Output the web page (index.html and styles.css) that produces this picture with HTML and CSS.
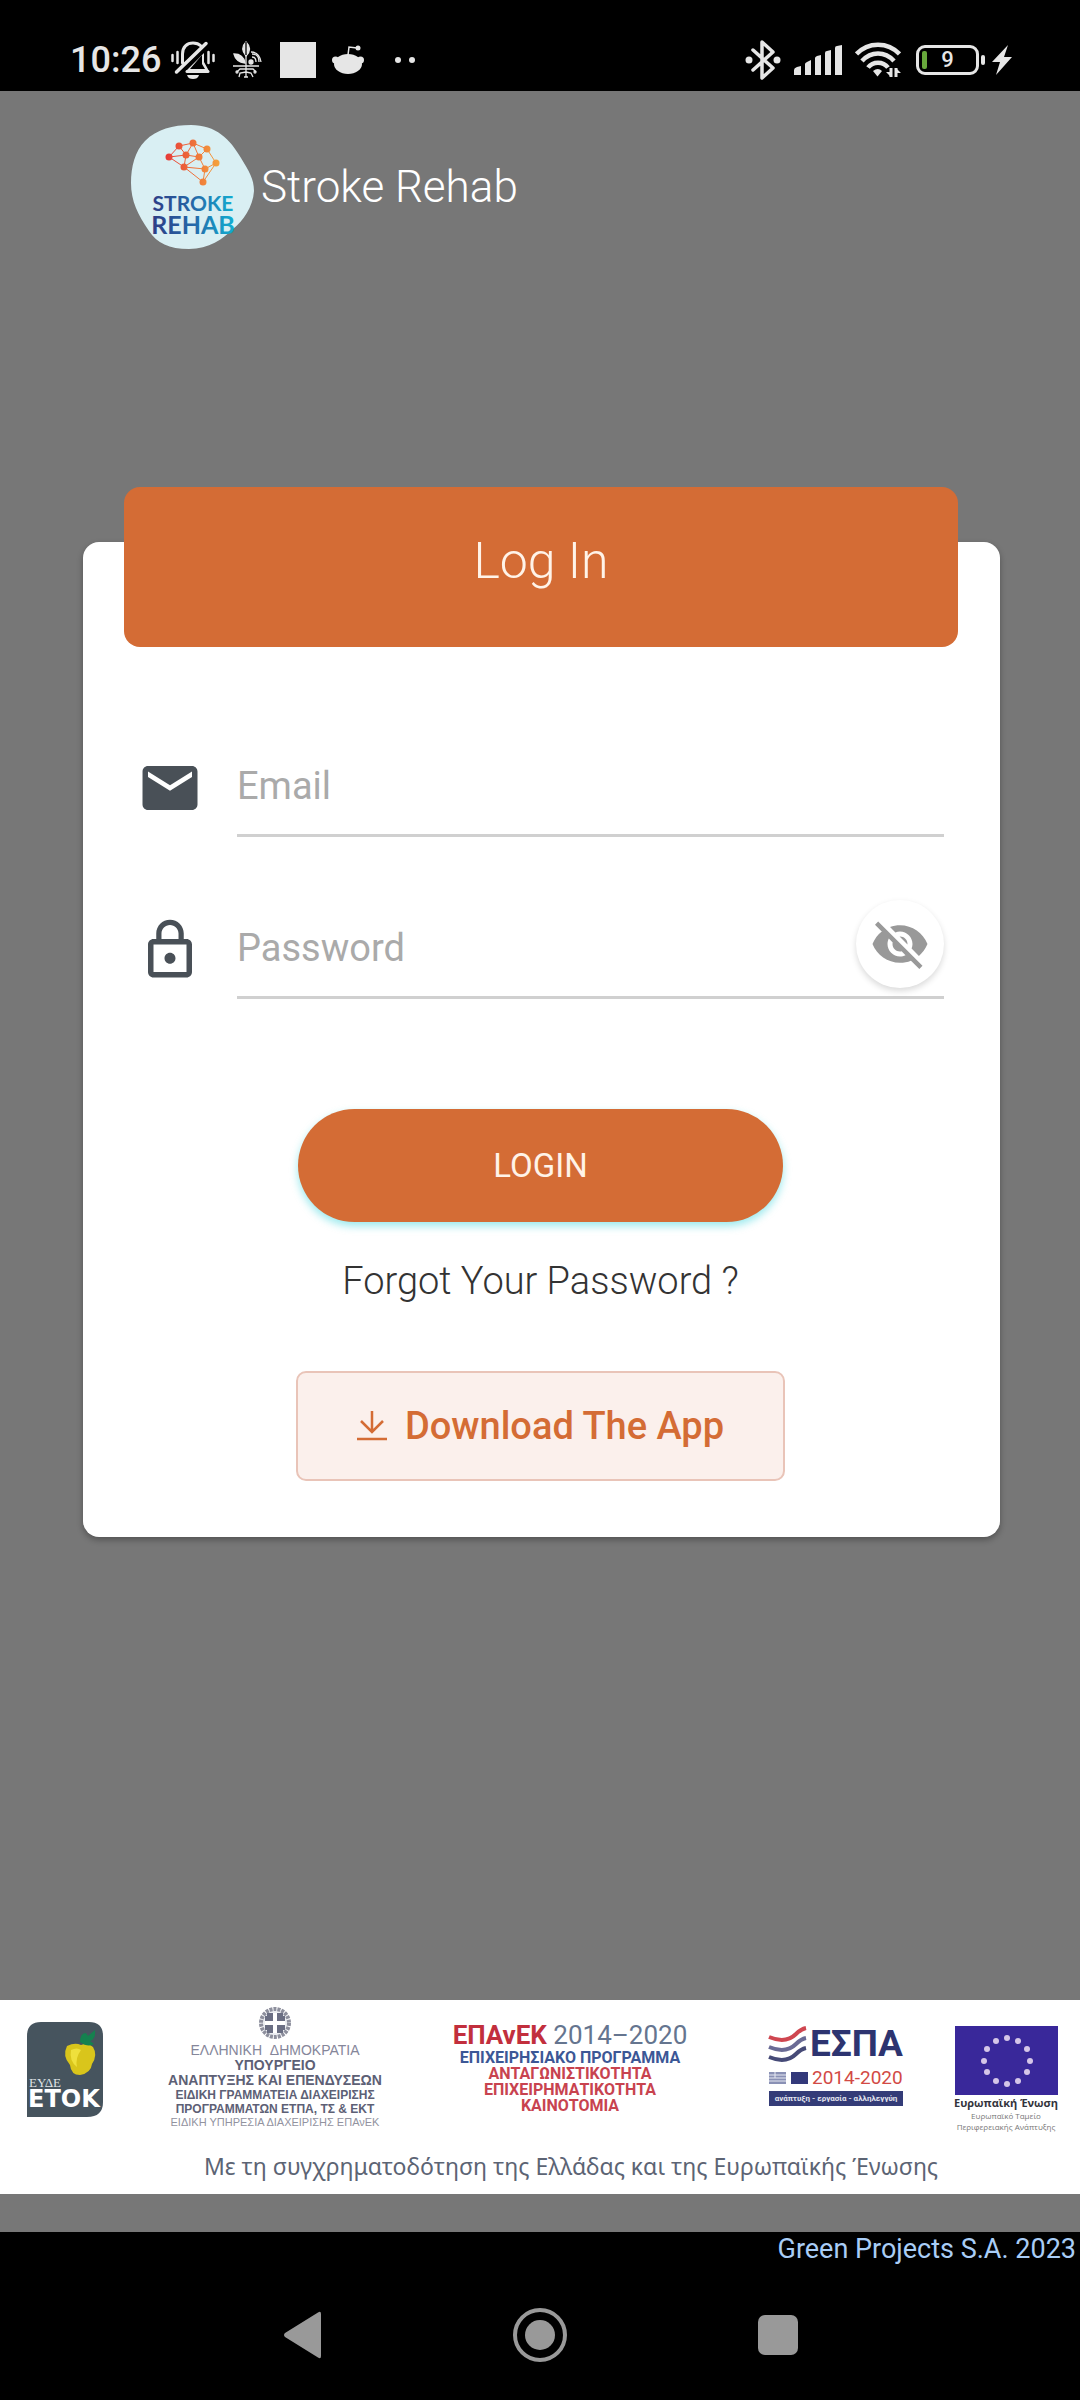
FILE: index.html
```html
<!DOCTYPE html>
<html lang="en">
<head>
    <title>Stroke Rehab</title>
    <meta charset="utf-8">
    <meta name="viewport" content="width=device-width, initial-scale=1">
    <link rel="stylesheet" href="styles.css">
</head>
<body>

<div class="status-bar">
    <div class="status-left">
        <span class="clock">10:26</span>
        <svg class="bell" width="44" height="38" viewBox="0 0 44 38" fill="none" stroke="#e6e6e6" stroke-linecap="round">
            <path d="M1.500 14v6M6.500 11v11M37.500 11v11M42.500 14v6" stroke-width="2.500"/>
            <path d="M11.500 22V13C11.500 6 16 2 22 2c3 0 6 1 8 3" stroke-width="3"/>
            <path d="M5.500 31L35 2.500" stroke-width="3.500"/>
            <path d="M33 12v9l5 9H15z" fill="#e6e6e6" stroke="none"/>
            <path d="M31 14v9l3 5H19z" fill="#000" stroke="none"/>
            <path d="M16 30.500h21" stroke-width="3"/>
            <path d="M16 34h12c-1 3-3 4-6 4s-5-1-6-4z" fill="#e6e6e6" stroke="none"/>
        </svg>
        <svg class="plant" width="30" height="38" viewBox="0 0 30 38" fill="none" stroke="#e6e6e6" stroke-width="1.300">
            <path d="M13 12V36M0 25h26"/>
            <path d="M13 15C8 9 10 4 13 1c4 4 5 9 0 14z" fill="#e6e6e6"/>
            <path d="M13 1v13" stroke="#000"/>
            <path d="M12 22C4 21 2 17 1 13c7 0 10 4 11 9z" fill="#e6e6e6"/>
            <path d="M19 16c3 0 4 2 4 5M19 13c5 0 7 3 7 8M18 11c6 0 9 4 10 10"/>
            <path d="M13 28H7l-3 3M13 31l-6 1-1 4M13 28h7l3 3M13 31l5 1 2 4M11 36h4"/>
            <circle cx="18" cy="21" r="2" fill="#e6e6e6"/>
            <circle cx="4" cy="31" r="1"/><circle cx="22" cy="31" r="1"/>
        </svg>
        <span class="block"></span>
        <svg class="reddit" width="32" height="30" viewBox="0 0 32 30" fill="#e6e6e6">
            <ellipse cx="16" cy="19" rx="14" ry="10"/>
            <circle cx="3.500" cy="15" r="3.500"/><circle cx="28.500" cy="15" r="3.500"/>
            <circle cx="26" cy="3" r="2.500"/>
            <path d="M16 10l1-8 8 1" fill="none" stroke="#e6e6e6" stroke-width="1.500"/>
        </svg>
        <svg width="20" height="6" viewBox="0 0 20 6" fill="#e6e6e6"><circle cx="3" cy="3" r="3"/><circle cx="17" cy="3" r="3"/></svg>
    </div>
    <div class="status-right">
        <svg width="36" height="40" viewBox="0 0 36 40" fill="none" stroke="#e6e6e6" stroke-width="3.500" stroke-linecap="round" stroke-linejoin="round">
            <path d="M8 10l20 18-11 10V2l11 10L8 30"/>
            <circle cx="4" cy="20" r="3.500" fill="#e6e6e6" stroke="none"/><circle cx="32" cy="20" r="3.500" fill="#e6e6e6" stroke="none"/>
        </svg>
        <svg class="signal" width="48" height="30" viewBox="0 0 48 30" fill="#e6e6e6">
            <path d="M0 25q0-2 3-3l4-1v9H0zM11 19q0-1 2-2l4-2v15h-6zM21 13q0-1 2-2l4-1v20h-6zM31 8q0-2 2-2l4-1v25h-6zM41 3q0-2 2-2l5-1v30h-7z"/>
        </svg>
        <svg width="46" height="36" viewBox="0 0 46 36" fill="none" stroke="#e6e6e6" stroke-width="4.500">
            <path d="M1.500 12C13-.5 33-.5 44.500 12M7 19C16 9 30 9 39 19M13 25.500C18 19 28 19 33 25.500"/>
            <path d="M18 29q5-4 9 0l-4.500 5.500z" fill="#e6e6e6" stroke="none"/>
            <path d="M36 26v9M41 35v-9" stroke-width="3"/>
            <path d="M31 30h5v5zM46 31h-5v-5z" fill="#e6e6e6" stroke="none"/>
        </svg>
        <span class="battery"><i class="charge"></i><b>9</b></span>
        <svg width="20" height="30" viewBox="0 0 20 30" fill="#e6e6e6"><path d="M16 0L0 17h8L4 30 20 12h-8z"/></svg>
    </div>
</div>

<div class="page">
    <header class="brand">
        <svg class="brand-logo" width="123" height="124" viewBox="0 0 123 124">
            <defs>
                <linearGradient id="word" x1="20" x2="104" y1="0" y2="0" gradientUnits="userSpaceOnUse">
                    <stop offset="0" stop-color="#2d3c85"/>
                    <stop offset=".5" stop-color="#2568a8"/>
                    <stop offset="1" stop-color="#12afd2"/>
                </linearGradient>
                <linearGradient id="net" x1="35" x2="88" y1="0" y2="0" gradientUnits="userSpaceOnUse">
                    <stop offset="0" stop-color="#e63b38"/>
                    <stop offset="1" stop-color="#f5a23c"/>
                </linearGradient>
            </defs>
            <path d="M60 0C85 0 99 14 110 33C118 46 123 54 123 66C122 82 112 96 102 104C92 114 78 124 58 124C38 124 26 118 18 106C7 90 0 76 0 58C0 42 4 26 14 16C26 4 42 0 60 0Z" fill="#d9eff3"/>
            <path d="M38 32L48 21L62 18L76 24L85 38L72 57L53 42ZM38 32L55 30L48 21M55 30L62 18L68 32L76 24M55 30L68 32L53 42L55 30M53 42L74 44L68 32M74 44L72 57M74 44L85 38" fill="none" stroke="url(#net)" stroke-width="1"/>
            <g fill="url(#net)">
                <circle cx="38" cy="32" r="3.500"/><circle cx="48" cy="21" r="3.500"/><circle cx="62" cy="18" r="3.500"/>
                <circle cx="76" cy="24" r="3.500"/><circle cx="85" cy="38" r="3.500"/><circle cx="55" cy="30" r="3.500"/>
                <circle cx="68" cy="32" r="3.500"/><circle cx="53" cy="42" r="3.500"/><circle cx="74" cy="44" r="3.500"/>
                <circle cx="72" cy="57" r="3.500"/>
            </g>
            <text class="word" x="62" y="86" font-size="21" text-anchor="middle" fill="url(#word)">STROKE</text>
            <text class="word" x="62" y="109" font-size="25" text-anchor="middle" fill="url(#word)">REHAB</text>
        </svg>
        <span class="brand-name">Stroke Rehab</span>
    </header>

    <main>
        <form class="card">
            <h1 class="card-head">Log In</h1>

            <div class="fields">
                <div class="field">
                    <label for="email">
                        <svg width="66" height="66" viewBox="0 0 24 24" fill="#495057" role="img" aria-label="Email"><path d="M20 4H4c-1.100 0-1.990.9-1.990 2L2 18c0 1.100.9 2 2 2h16c1.100 0 2-.9 2-2V6c0-1.100-.9-2-2-2zm0 4l-8 5-8-5V6l8 5 8-5v2z"/></svg>
                    </label>
                    <input type="email" id="email" placeholder="Email">
                </div>
                <div class="field">
                    <label for="password">
                        <svg width="66" height="66" viewBox="0 0 24 24" fill="#495057" role="img" aria-label="Password"><path d="M12 17c1.100 0 2-.9 2-2s-.9-2-2-2-2 .9-2 2 .9 2 2 2zm6-9h-1V6c0-2.760-2.240-5-5-5S7 3.240 7 6v2H6c-1.100 0-2 .9-2 2v10c0 1.100.9 2 2 2h12c1.100 0 2-.9 2-2V10c0-1.100-.9-2-2-2zM8.900 6c0-1.710 1.390-3.100 3.100-3.100s3.100 1.390 3.100 3.100v2H8.900V6zM18 20H6V10h12v10z"/></svg>
                    </label>
                    <input type="password" id="password" placeholder="Password">
                    <button type="button" class="reveal" aria-label="Show password">
                        <svg width="60" height="60" viewBox="0 0 24 24" fill="#999"><path d="M12 7c2.760 0 5 2.240 5 5 0 .65-.13 1.260-.36 1.830l2.920 2.920c1.510-1.260 2.700-2.890 3.430-4.750-1.730-4.390-6-7.500-11-7.500-1.400 0-2.740.25-3.980.7l2.160 2.160C10.740 7.130 11.350 7 12 7zM2 4.270l2.280 2.280.46.46C3.080 8.300 1.780 10.020 1 12c1.730 4.390 6 7.500 11 7.500 1.550 0 3.030-.3 4.380-.84l.42.42L19.730 22 21 20.730 3.270 3 2 4.270zM7.530 9.800l1.550 1.550c-.05.21-.08.43-.08.65 0 1.660 1.340 3 3 3 .22 0 .44-.03.65-.08l1.550 1.550c-.67.33-1.410.53-2.200.53-2.760 0-5-2.240-5-5 0-.79.2-1.530.53-2.200zm4.310-.78l3.150 3.150.02-.16c0-1.660-1.340-3-3-3l-.17.01z"/></svg>
                    </button>
                </div>
            </div>

            <button type="submit" class="login">LOGIN</button>
            <a class="forgot" href="#">Forgot Your Password ?</a>
            <a class="download" href="#">
                <svg width="30" height="30" viewBox="0 0 30 30" fill="none" stroke="#d46c35" stroke-width="2.500"><path d="M15 0v21M4 10l11 11 11-11M0 28h30"/></svg>
                Download The App
            </a>
        </form>
    </main>

    <section class="sponsors" lang="el">
        <div class="logos">
            <svg width="76" height="95" viewBox="0 0 76 95">
                <path d="M0 95V14Q0 0 14 0H62Q76 0 76 14V80Q76 95 60 95Z" fill="#46545e"/>
                <path d="M40 24q8-4 14-1q7-3 12 2q5 8-1 17q-1 9-12 11q-9 0-10-10q-8-9-3-19z" fill="#d9c51b"/>
                <path d="M44 28q6-3 10 0q-6 8-4 17q-8-6-6-17z" fill="#efe03c"/>
                <path d="M53 20q0-9 6-9l2 3 7-6q1 9-5 11l4 3q-6 4-14-2z" fill="#15814f"/>
                <text x="2" y="65" font-family="Liberation Serif, serif" font-size="13" fill="#dfe3e6">ΕΥΔΕ</text>
                <text x="1" y="85" font-family="DejaVu Sans, sans-serif" font-size="24" font-weight="bold" fill="#fff">ΕΤΟΚ</text>
            </svg>

            <div class="ministry">
                <svg width="34" height="34" viewBox="0 0 34 34">
                    <circle cx="17" cy="17" r="14" fill="#eceef2" stroke="#8d8f9d" stroke-width="4" stroke-dasharray="3 1"/>
                    <path d="M9 7h16v20H9zM7 10h20v14H7z" fill="#6a6e83"/>
                    <path d="M17 7v20M7 17h20" stroke="#fff" stroke-width="4"/>
                </svg>
                <span class="republic">ΕΛΛΗΝΙΚΗ &nbsp;ΔΗΜΟΚΡΑΤΙΑ</span>
                <b>ΥΠΟΥΡΓΕΙΟ</b>
                <b>ΑΝΑΠΤΥΞΗΣ ΚΑΙ ΕΠΕΝΔΥΣΕΩΝ</b>
                <b class="office">ΕΙΔΙΚΗ ΓΡΑΜΜΑΤΕΙΑ ΔΙΑΧΕΙΡΙΣΗΣ</b>
                <b class="office">ΠΡΟΓΡΑΜΜΑΤΩΝ ΕΤΠΑ, ΤΣ &amp; ΕΚΤ</b>
                <span class="service">ΕΙΔΙΚΗ ΥΠΗΡΕΣΙΑ ΔΙΑΧΕΙΡΙΣΗΣ ΕΠΑνΕΚ</span>
            </div>

            <div class="epanek">
                <p class="epanek-title"><b>ΕΠΑνΕΚ</b> 2014–2020</p>
                <p class="programme">ΕΠΙΧΕΙΡΗΣΙΑΚΟ ΠΡΟΓΡΑΜΜΑ</p>
                <p>ΑΝΤΑΓΩΝΙΣΤΙΚΟΤΗΤΑ</p>
                <p>ΕΠΙΧΕΙΡΗΜΑΤΙΚΟΤΗΤΑ</p>
                <p>ΚΑΙΝΟΤΟΜΙΑ</p>
            </div>

            <svg class="espa" width="134" height="80" viewBox="0 0 134 80">
                <g fill="none" stroke-width="4">
                    <path d="M0 11c12 5 21 3 27-3q5-5 10-6" stroke="#cf4650"/>
                    <path d="M0 21c12 5 21 3 27-3q5-5 10-6" stroke="#6a6b95"/>
                    <path d="M0 31c12 5 21 3 27-3q5-5 10-6" stroke="#464a77"/>
                </g>
                <text x="41" y="30" font-family="Roboto, sans-serif" font-size="37" font-weight="bold" fill="#2d3470">ΕΣΠΑ</text>
                <path d="M0 46h17v12H0z" fill="#8a91b5"/>
                <path d="M0 49h17M0 52h17M0 55h17M6 46v6" stroke="#e7e9f2"/>
                <path d="M22 46h17v12H22z" fill="#33397a"/>
                <text x="43" y="58" font-family="Roboto, sans-serif" font-size="19" fill="#d24a45">2014-2020</text>
                <path d="M0 65h134v15H0z" fill="#343c78"/>
                <text x="67" y="75" text-anchor="middle" font-family="Roboto, sans-serif" font-size="8" font-weight="bold" fill="#e2e4ef">ανάπτυξη - εργασία - αλληλεγγύη</text>
            </svg>

            <div class="eu">
                <svg width="103" height="69" viewBox="0 0 103 69">
                    <path d="M0 0h103v69H0z" fill="#39289a"/>
                    <g fill="#d5c6e8">
                        <circle cx="52" cy="12" r="3"/><circle cx="63" cy="15" r="3"/><circle cx="72" cy="23" r="3"/>
                        <circle cx="75" cy="35" r="3"/><circle cx="72" cy="46" r="3"/><circle cx="63" cy="55" r="3"/>
                        <circle cx="52" cy="58" r="3"/><circle cx="41" cy="55" r="3"/><circle cx="32" cy="46" r="3"/>
                        <circle cx="29" cy="35" r="3"/><circle cx="32" cy="23" r="3"/><circle cx="41" cy="15" r="3"/>
                    </g>
                </svg>
                <b>Ευρωπαϊκή Ένωση</b>
                <span>Ευρωπαϊκό Ταμείο</span>
                <span>Περιφερειακής Ανάπτυξης</span>
            </div>
        </div>
        <p class="cofunding">Με τη συγχρηματοδότηση της Ελλάδας και της Ευρωπαϊκής Ένωσης</p>
    </section>
</div>

<footer class="credit"><a href="#">Green Projects S.A. 2023</a></footer>

<nav class="system-nav">
    <button type="button" aria-label="Back"><svg width="38" height="48" viewBox="0 0 38 48" fill="#999"><path d="M35 1.500Q38-.5 38 3V45Q38 48.500 35 46.500L2 26Q0 24 2 22Z"/></svg></button>
    <button type="button" aria-label="Home"><svg width="54" height="54" viewBox="0 0 54 54"><circle cx="27" cy="27" r="25" fill="none" stroke="#999" stroke-width="4"/><circle cx="27" cy="27" r="15" fill="#999"/></svg></button>
    <button type="button" aria-label="Recent apps"><svg width="40" height="40" viewBox="0 0 40 40" fill="#999"><rect width="40" height="40" rx="7"/></svg></button>
</nav>

</body>
</html>
```
FILE: styles.css
```css
* {
    box-sizing: border-box;
}
body, html {
    margin: 0; padding: 0;
}
body {
    display: flex;
    flex-direction: column;
    min-height: 100vh;
    background: #000;
    font-family: Roboto, sans-serif;
}
svg {
    display: block;
    flex: none;
}
a {
    color: inherit;
    text-decoration: none;
}
a:hover {text-decoration: underline;}
button {
    border: none;
    padding: 0;
    background: transparent;
    font-family: inherit;
    cursor: pointer;
}

/* phone status bar */
.status-bar {
    display: flex;
    justify-content: space-between;
    padding: 28px 68px 0 70px;
    height: 91px;
    color: #e6e6e6;
}
.status-left, .status-right {
    display: flex;
    align-items: center;
    height: 63px;
}
.clock {
    font-size: 36px;
    font-weight: 500;
    margin-right: 10px;
}
.plant {
    margin: 0 17px 0 18px;
}
.block {
    width: 36px;
    height: 36px;
    background: #e6e6e6;
}
.reddit {
    margin: 0 31px 0 16px;
}
.status-right {
    gap: 13px;
}
.battery {
    position: relative;
    display: flex;
    align-items: center;
    justify-content: center;
    width: 63px;
    height: 30px;
    margin-left: 2px;
    border: 3px solid #e6e6e6;
    border-radius: 9px;
}
.battery:after {
    content: "";
    position: absolute;
    right: -9px;
    width: 4px;
    height: 10px;
    border-radius: 2px;
    background: #e6e6e6;
}
.battery b {
    font-size: 22px;
    font-weight: 500;
}
.charge {
    position: absolute;
    left: 3px;
    width: 5px;
    height: 18px;
    border-radius: 2px;
    background: #68a83c;
}

/* page */
.page {
    flex: 1;
    display: flex;
    flex-direction: column;
    padding-bottom: 38px;
    background: #777;
}
.brand {
    display: flex;
    align-items: center;
    gap: 7px;
    padding: 34px 131px 0;
}
.brand-name {
    color: #fff;
    font-size: 44px;
    font-weight: 300;
}
.word {
    font-family: Lato, sans-serif;
    font-weight: 700;
}
main {
    flex: 1;
    padding: 293px 80px 60px 83px;
}

/* login card */
.card {
    display: flex;
    flex-direction: column;
    align-items: center;
    padding: 0 56px 56px 54px;
    border-radius: 16px;
    background: #fff;
    box-shadow: 0 3px 6px rgba(0, 0, 0, 0.3);
}
.card-head {
    align-self: stretch;
    margin: -55px -14px 0 -13px;
    padding: 46px 0 58px;
    border-radius: 16px;
    background: #d46c35;
    color: #fff3e8;
    font-size: 50px;
    font-weight: 300;
    line-height: 56px;
    text-align: center;
}
.fields {
    align-self: stretch;
    display: flex;
    flex-direction: column;
    gap: 60px;
    padding-top: 88px;
}
.field {
    position: relative;
    display: flex;
    align-items: center;
    gap: 34px;
}
.field label {
    padding-top: 3px;
}
.field input {
    flex: 1;
    min-width: 0;
    height: 102px;
    padding: 3px 0 0;
    border: none;
    border-bottom: 3px solid #d0d0d0;
    border-radius: 0;
    background: transparent;
    color: #495057;
    font-family: inherit;
    font-size: 38px;
    outline: 0px none;
}
.field input::placeholder {
    color: #aaa;
}
.reveal {
    position: absolute;
    top: 3px;
    right: 0;
    display: flex;
    align-items: center;
    justify-content: center;
    width: 88px;
    height: 88px;
    border-radius: 50%;
    background: #fff;
    box-shadow: 0 3px 6px rgba(0, 0, 0, 0.15);
}
.login {
    width: 485px;
    max-width: 100%;
    height: 113px;
    margin-top: 110px;
    border-radius: 57px;
    background: #d46c35;
    box-shadow: 0 4px 8px rgba(0, 200, 210, 0.4);
    color: #fff3e8;
    font-size: 33px;
}
.forgot {
    margin-top: 36px;
    color: #333;
    font-size: 38px;
    font-weight: 300;
    line-height: 46px;
}
.download {
    display: flex;
    align-items: center;
    justify-content: center;
    gap: 18px;
    width: 489px;
    max-width: 100%;
    height: 110px;
    margin-top: 67px;
    border: 2px solid #e9c4b8;
    border-radius: 10px;
    background: #fbf0ec;
    color: #d46c35;
    font-size: 38px;
    font-weight: 500;
}

/* sponsor strip */
.sponsors {
    padding: 6px 0 12px;
    background: #fff;
}
.logos {
    display: grid;
    grid-template-columns: 130fr 290fr 300fr 232fr 108fr;
    justify-items: center;
    align-items: start;
    height: 136px;
    padding-right: 20px;
}
.logos > svg:first-child {
    margin-top: 16px;
}
.ministry {
    display: flex;
    flex-direction: column;
    align-items: center;
    color: #5d6075;
    font-family: "Liberation Sans", sans-serif;
    font-size: 14px;
    line-height: 15px;
    white-space: nowrap;
}
.ministry svg {
    margin-bottom: 3px;
}
.ministry .republic {
    color: #85869a;
}
.ministry .office {
    font-size: 12px;
    line-height: 14px;
}
.ministry .service {
    color: #92939f;
    font-size: 11px;
    line-height: 13px;
}
.epanek {
    padding-top: 14px;
    color: #c8434f;
    font-family: Roboto, sans-serif;
    font-size: 16px;
    font-weight: 700;
    line-height: 16px;
    text-align: center;
    white-space: nowrap;
}
.epanek p {
    margin: 0;
}
.epanek .epanek-title {
    color: #65758f;
    font-size: 26px;
    font-weight: 400;
    line-height: 30px;
}
.epanek-title b {
    color: #c22f3d;
}
.epanek .programme {
    color: #3c5796;
}
.espa {
    margin-top: 20px;
    overflow: visible;
}
.eu {
    display: flex;
    flex-direction: column;
    align-items: center;
    padding-top: 20px;
    color: #777;
    font-family: "Open Sans", sans-serif;
    font-size: 8px;
    line-height: 11px;
    white-space: nowrap;
}
.eu b {
    color: #33343c;
    font-size: 11px;
    line-height: 15px;
}
.cofunding {
    margin: 8px 0 0;
    padding-left: 62px;
    color: #5c6474;
    font-family: "Noto Sans", sans-serif;
    font-size: 23px;
    line-height: 32px;
    text-align: center;
}

.credit {
    padding: 1px 4px 5px;
    color: #a9cdf6;
    font-size: 27px;
    line-height: 32px;
    text-align: right;
}
.system-nav {
    display: flex;
    justify-content: center;
    align-items: center;
    gap: 138px;
    height: 130px;
}
.system-nav button {
    display: flex;
    align-items: center;
    justify-content: center;
    width: 100px;
    height: 100px;
}
```
